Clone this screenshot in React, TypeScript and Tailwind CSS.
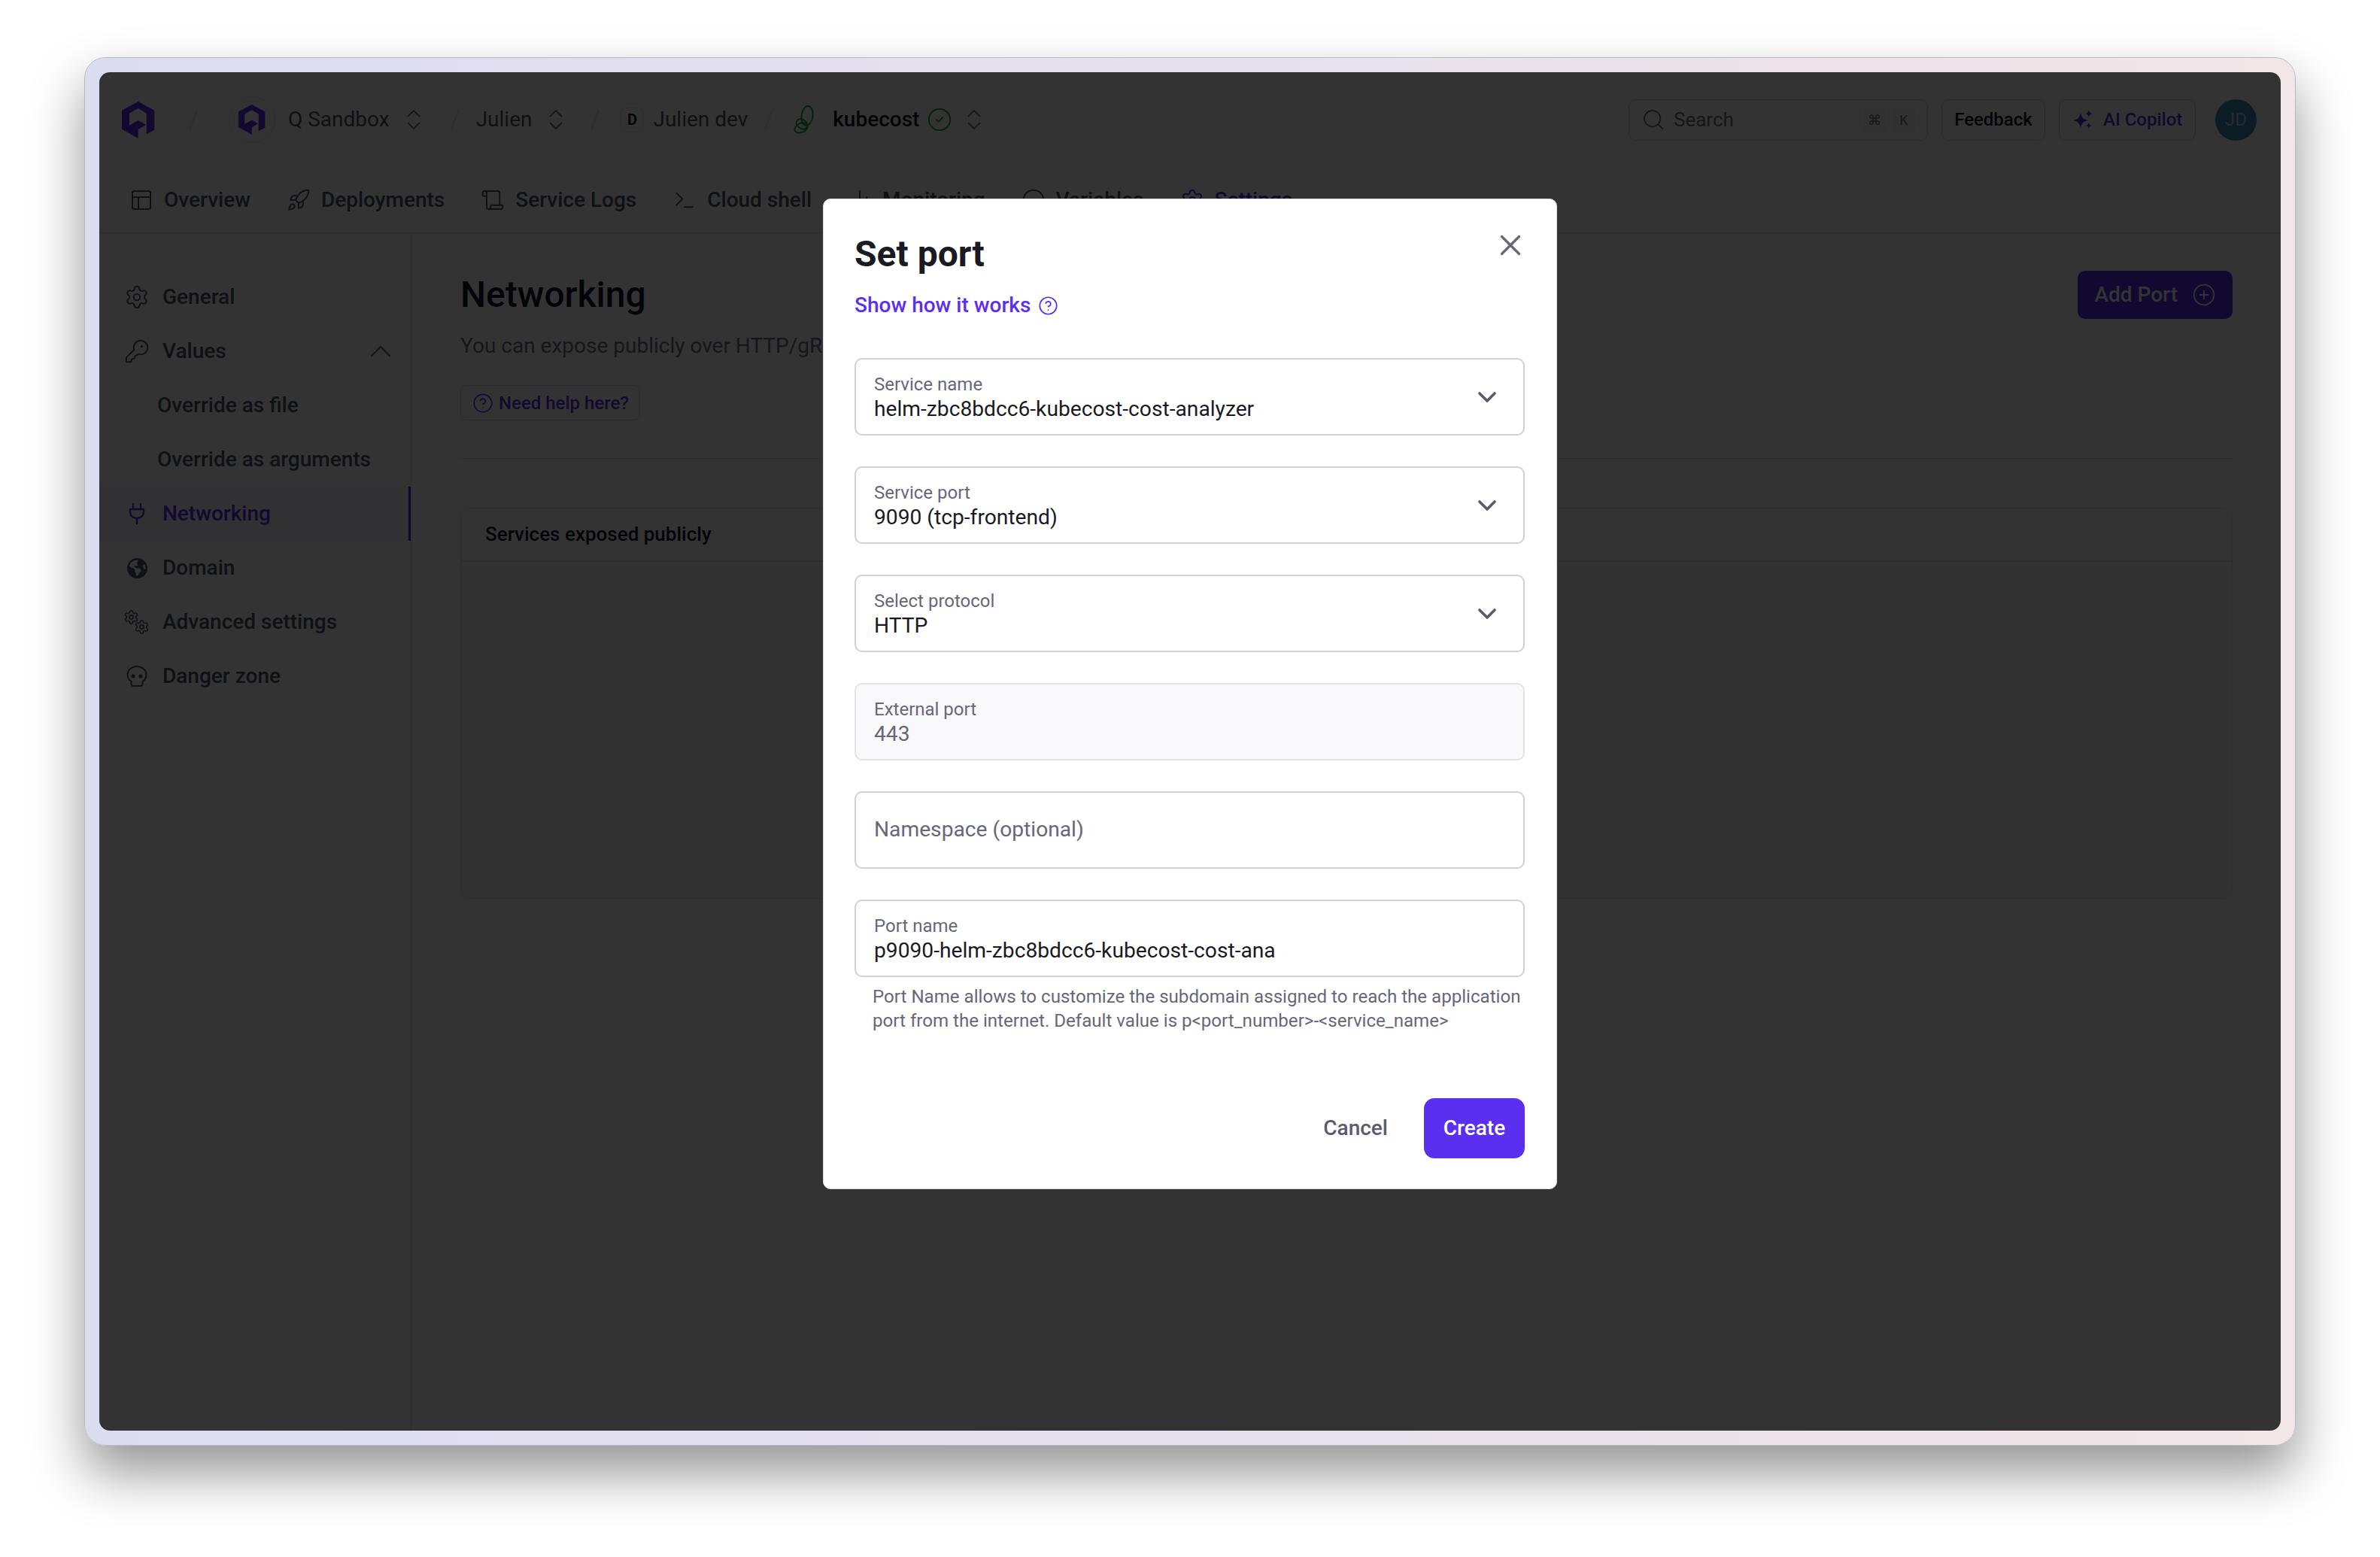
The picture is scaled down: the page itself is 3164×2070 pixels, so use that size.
import { ChevronDown, ChevronUp, ChevronsUpDown, Circle, CircleCheck, CircleHelp, CirclePlus, KeyRound, Layout, ChartNoAxesColumn, Rocket, Scroll, Search, Settings, Terminal, X } from 'lucide-react';
import { FaEarthAmericas } from 'react-icons/fa6';
import type { ReactNode } from 'react';

const Logo = ({ className }: { className: string }) => (
  <svg viewBox="0 0 44 49" className={className}>
    <path
      fill="#5b2ff0"
      d="M21.7 0 43.3 11.7V37.7L32.7 43.3V15.7L21.7 9 10 15.7V31.7L21.7 25 32 31 21.7 37V49L0 36.7V11.7Z"
    />
  </svg>
);

const Slash = ({ className }: { className: string }) => (
  <span className={`w-[2px] h-[28px] bg-gray-200 rotate-[20deg] ${className}`} />
);

const UpDown = () => <ChevronsUpDown className="w-[36px] h-[36px] text-gray-500" strokeWidth={1.2} />;

const tabIcon = 'w-[32px] h-[32px]';
const tabs = [
  { label: 'Overview', icon: <Layout className={tabIcon} strokeWidth={1.5} /> },
  { label: 'Deployments', icon: <Rocket className={tabIcon} strokeWidth={1.5} /> },
  { label: 'Service Logs', icon: <Scroll className={tabIcon} strokeWidth={1.5} /> },
  { label: 'Cloud shell', icon: <Terminal className={tabIcon} strokeWidth={1.5} /> },
  { label: 'Monitoring', icon: <ChartNoAxesColumn className={tabIcon} strokeWidth={1.5} /> },
  { label: 'Variables', icon: <Circle className={tabIcon} strokeWidth={1.5} /> },
  { label: 'Settings', icon: <Settings className={tabIcon} strokeWidth={1.5} />, active: true },
];

const GearsIcon = () => (
  <svg viewBox="0 0 34 34" className="w-[34px] h-[34px] text-gray-600">
    <Settings x={-1} y={0} width={21} height={21} strokeWidth={1.8} />
    <Settings x={13} y={13} width={21} height={21} strokeWidth={1.8} />
  </svg>
);

const PlugIcon = () => (
  <svg viewBox="-5 -3 34 34" className="w-[34px] h-[34px]" fill="none" stroke="currentColor" strokeWidth="2.4" strokeLinecap="round" strokeLinejoin="round">
    <path d="M7 1v7M17 1v7M3 8h18v4a9 8 0 0 1-18 0ZM12 20v7" />
  </svg>
);

const SkullIcon = () => (
  <svg viewBox="0 0 34 34" className="w-[34px] h-[34px] text-gray-600" fill="none" stroke="currentColor" strokeWidth="2">
    <path d="M17 4C10 4 4.500 9 4.500 15c0 4 2 7 5 9v3a3 3 0 0 0 3 3h9a3 3 0 0 0 3-3v-3c3-2 5-5 5-9 0-6-5.500-11-12.500-11Z" />
    <circle cx="12" cy="17" r="2.600" fill="currentColor" stroke="none" />
    <circle cx="22" cy="17" r="2.600" fill="currentColor" stroke="none" />
  </svg>
);

const SideItem = ({ icon, label, active }: { icon: ReactNode; label: string; active?: boolean }) => (
  <div
    className={`flex items-center gap-[17px] h-[72px] pl-[33px] font-medium text-[28px] ${
      active ? 'bg-[#f5f3ff] text-[#5b2ff0] border-r-[3px] border-[#5b2ff0]' : 'text-gray-600'
    }`}
  >
    {icon}
    {label}
  </div>
);

const Field = ({
  label,
  value,
  select,
  muted,
}: {
  label: string;
  value: string;
  select?: boolean;
  muted?: boolean;
}) => (
  <div
    className={`flex items-center justify-between h-[103px] pl-[24px] pr-[28px] rounded-[10px] border-2 ${
      muted ? 'bg-[#f9f9fb] border-[#e2e2ea]' : 'bg-white border-[#d0d0da]'
    }`}
  >
    <div className="flex flex-col">
      <span className="text-[24px] leading-[32px] text-[#67677a]">{label}</span>
      <span className={`text-[28.2px] leading-[34px] ${muted ? 'text-[#67677a]' : 'text-[#1a1a24]'}`}>{value}</span>
    </div>
    {select && <ChevronDown className="w-[40px] h-[40px] text-[#5b5b6c]" strokeWidth={2.2} />}
  </div>
);

export default function App() {
  return (
    <div className="w-[3164px] h-[2070px] bg-white pt-[76px] pl-[112px] font-['Roboto',sans-serif]">
      <div className="h-[1846px] w-[2940px] rounded-[28px] p-[19px] bg-gradient-to-r from-[#dcdcf1] to-[#f1e6e8] border border-[#b9b9c0] shadow-[0_36px_70px_rgba(0,0,0,0.42)]">
        <div className="relative h-full rounded-[14px] overflow-hidden bg-white flex flex-col">
          {/* Top bar */}
          <div className="flex items-center h-[126px] pl-[30px] pr-[32px]">
            <Logo className="w-[44px] h-[49px]" />
            <Slash className="ml-[50px] mr-[46px]" />
            <div className="flex items-center justify-center w-[62px] h-[62px] rounded-full border border-gray-200 mr-[17px]">
              <Logo className="w-[36px] h-[40px]" />
            </div>
            <div className="flex items-center gap-[14px] text-[28px] text-gray-600">
              Q Sandbox
              <UpDown />
            </div>
            <Slash className="ml-[36px] mr-[27px]" />
            <div className="flex items-center gap-[14px] text-[28px] text-gray-600">
              Julien
              <UpDown />
            </div>
            <Slash className="ml-[33px] mr-[32px]" />
            <div className="flex items-center justify-center w-[32px] h-[33px] rounded-[8px] border border-gray-200 text-[20px] font-bold text-gray-900 mr-[12px]">
              D
            </div>
            <span className="text-[28px] text-gray-600">Julien dev</span>
            <Slash className="ml-[27px] mr-[31px]" />
            <svg viewBox="0 0 28 39" className="w-[28px] h-[39px] mr-[25px]" fill="none" stroke="#16a34a" strokeWidth="2">
              <ellipse cx="19" cy="14" rx="7.500" ry="13" transform="rotate(8 19 14)" />
              <ellipse cx="12" cy="25" rx="8" ry="6" transform="rotate(35 12 25)" />
              <ellipse cx="11" cy="30" rx="9" ry="6" transform="rotate(-25 11 30)" />
            </svg>
            <span className="text-[28px] font-medium text-gray-900">kubecost</span>
            <CircleCheck className="w-[34px] h-[34px] text-green-600 ml-[10px] mr-[11px]" strokeWidth={1.3} />
            <UpDown />
            <div className="ml-auto flex items-center">
              <div className="flex items-center w-[398px] h-[55px] rounded-[10px] border border-gray-300 pl-[16px] pr-[16px] text-gray-500 text-[26px]">
                <Search className="w-[32px] h-[32px] mr-[11px]" strokeWidth={1.4} />
                Search
                <span className="ml-auto flex items-center justify-center w-[30px] h-[32px] rounded-[4px] bg-gray-100 text-[18px]">⌘</span>
                <span className="ml-[9px] flex items-center justify-center w-[30px] h-[32px] rounded-[4px] bg-gray-100 text-[18px]">K</span>
              </div>
              <div className="flex items-center justify-center w-[138px] h-[55px] ml-[18px] rounded-[10px] border border-gray-300 text-[24px] font-medium text-gray-900">
                Feedback
              </div>
              <div className="flex items-center gap-[13px] w-[182px] h-[55px] ml-[18px] pl-[18px] rounded-[10px] border border-[#cfc6fa] text-[24px] font-medium text-[#5b2ff0]">
                <svg viewBox="0 0 27 26" className="w-[27px] h-[26px]" fill="currentColor">
                  <path d="M10 4C11 10 14 13 20 14 14 15 11 18 10 24 9 18 6 15 0 14 6 13 9 10 10 4Z" />
                  <path d="M21 0C21.500 3 23 4.500 26 5 23 5.500 21.500 7 21 10 20.500 7 19 5.500 16 5 19 4.500 20.500 3 21 0Z" />
                  <path d="M21 17C21.400 19.500 22.500 20.600 25 21 22.500 21.400 21.400 22.500 21 26 20.600 22.500 19.500 21.400 17 21 19.500 20.600 20.600 19.500 21 17Z" />
                </svg>
                AI Copilot
              </div>
              <div className="flex items-center justify-center w-[55px] h-[55px] ml-[26px] rounded-full bg-[#3f8cb8] text-[24px] text-[#b9d6e8]">
                JD
              </div>
            </div>
          </div>

          {/* Tabs */}
          <div className="flex items-center gap-[48px] h-[88px] pl-[40px] border-b border-gray-200 text-[28px] font-medium text-gray-600">
            {tabs.map((tab) => (
              <div key={tab.label} className={`flex items-center gap-[14px] ${tab.active ? 'text-[#5b2ff0]' : ''}`}>
                {tab.icon}
                {tab.label}
              </div>
            ))}
          </div>

          {/* Body */}
          <div className="flex flex-1">
            <div className="w-[415px] border-r border-gray-200 pt-[49px] flex flex-col">
              <SideItem icon={<Settings className="w-[34px] h-[34px]" strokeWidth={1.4} />} label="General" />
              <div className="flex items-center gap-[17px] h-[72px] pl-[33px] pr-[16px] font-medium text-[28px] text-gray-600">
                <KeyRound className="w-[34px] h-[34px]" strokeWidth={1.4} />
                Values
                <ChevronUp className="ml-auto w-[48px] h-[48px] text-gray-500" strokeWidth={1.2} />
              </div>
              <div className="flex items-center h-[72px] pl-[77px] font-medium text-[28px] text-gray-600">Override as file</div>
              <div className="flex items-center h-[72px] pl-[77px] font-medium text-[28px] text-gray-600">Override as arguments</div>
              <SideItem active icon={<PlugIcon />} label="Networking" />
              <SideItem
                icon={
                  <span className="flex items-center justify-center w-[34px] h-[34px]">
                    <FaEarthAmericas className="w-[27px] h-[27px]" />
                  </span>
                }
                label="Domain"
              />
              <SideItem icon={<GearsIcon />} label="Advanced settings" />
              <SideItem icon={<SkullIcon />} label="Danger zone" />
            </div>
            <div className="flex-1 pt-[50px] pl-[65px] pr-[64px]">
              <div className="flex justify-between items-start h-[250px] border-b border-gray-200">
                <div>
                  <div className="text-[48px] leading-[64px] font-medium text-gray-900">Networking</div>
                  <div className="text-[28px] leading-[40px] mt-[16px] text-gray-500">
                    You can expose publicly over HTTP/gRPC/TCP/UDP the ports of your service.
                  </div>
                  <div className="mt-[32px] inline-flex items-center gap-[7px] h-[47px] pl-[15px] pr-[14px] rounded-[8px] border border-[#d9d2fb] text-[24px] font-medium text-[#5b2ff0]">
                    <CircleHelp className="w-[28px] h-[28px]" strokeWidth={1.5} />
                    Need help here?
                  </div>
                </div>
                <div className="flex items-center gap-[19px] h-[64px] px-[22px] rounded-[10px] bg-[#5b2ff0] text-white text-[28px] font-medium">
                  Add Port
                  <CirclePlus className="w-[32px] h-[32px]" strokeWidth={1.4} />
                </div>
              </div>
              <div className="mt-[65px] flex flex-col h-[520px] rounded-[12px] border border-gray-200">
                <div className="flex items-center h-[71px] pl-[32px] border-b-2 border-gray-200 text-[26px] font-medium text-gray-900">
                  Services exposed publicly
                </div>
                <div className="flex-1 bg-[#f9f9fb] rounded-[12px]" />
              </div>
            </div>
          </div>

          {/* Dim layer under the dialog */}
          <div className="absolute inset-0 bg-black/80" />

          {/* Dialog */}
          <div className="absolute left-[962px] top-[168px] flex flex-col w-[976px] h-[1317px] bg-white rounded-[10px] border border-[#dcdce4] pl-[41px] pr-[42px] pt-[39px]">
            <div className="text-[48px] leading-[68px] font-bold text-[#1a1a24]">Set port</div>
            <X className="absolute right-[38px] top-[38px] w-[46px] h-[46px] text-[#67677a]" strokeWidth={1.7} />
            <div className="flex items-center gap-[10px] mt-[16px] text-[28px] leading-[36px] font-medium text-[#5b2ff0]">
              Show how it works
              <CircleHelp className="w-[27px] h-[27px]" strokeWidth={1.5} />
            </div>
            <div className="flex flex-col gap-[41px] mt-[52px]">
              <Field label="Service name" value="helm-zbc8bdcc6-kubecost-cost-analyzer" select />
              <Field label="Service port" value="9090 (tcp-frontend)" select />
              <Field label="Select protocol" value="HTTP" select />
              <Field label="External port" value="443" muted />
              <div className="flex items-center h-[103px] pl-[24px] rounded-[10px] border-2 border-[#d0d0da] text-[28.2px] text-[#67677a]">
                Namespace (optional)
              </div>
              <div>
                <Field label="Port name" value="p9090-helm-zbc8bdcc6-kubecost-cost-ana" />
                <div className="mt-[10px] pl-[24px] text-[24.1px] leading-[32px] text-[#67677a]">
                  Port Name allows to customize the subdomain assigned to reach the application port from the internet. Default value is p&lt;port_number&gt;-&lt;service_name&gt;
                </div>
              </div>
            </div>
            <div className="flex justify-end items-center gap-[48px] mt-auto mb-[40px]">
              <span className="text-[28px] font-medium text-[#5b5b6c]">Cancel</span>
              <div className="flex items-center justify-center w-[134px] h-[80px] rounded-[14px] bg-[#5b2ff0] text-white text-[28px] font-medium">
                Create
              </div>
            </div>
          </div>
        </div>
      </div>
    </div>
  );
}
